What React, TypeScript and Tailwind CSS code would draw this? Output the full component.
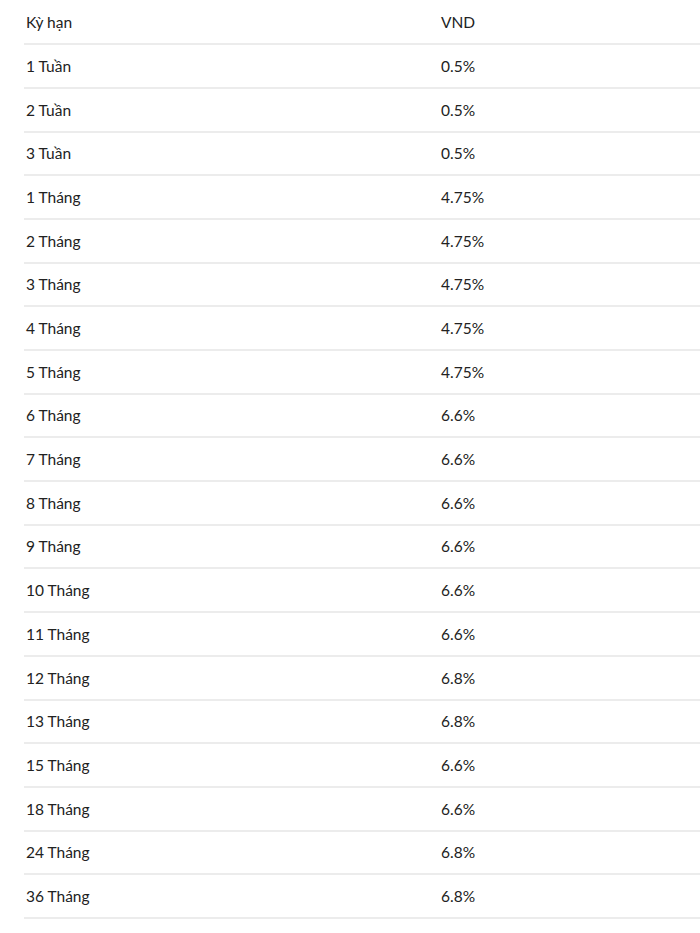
import React from "react";

const rows: [string, string][] = [
  ["1 Tuần", "0.5%"],
  ["2 Tuần", "0.5%"],
  ["3 Tuần", "0.5%"],
  ["1 Tháng", "4.75%"],
  ["2 Tháng", "4.75%"],
  ["3 Tháng", "4.75%"],
  ["4 Tháng", "4.75%"],
  ["5 Tháng", "4.75%"],
  ["6 Tháng", "6.6%"],
  ["7 Tháng", "6.6%"],
  ["8 Tháng", "6.6%"],
  ["9 Tháng", "6.6%"],
  ["10 Tháng", "6.6%"],
  ["11 Tháng", "6.6%"],
  ["12 Tháng", "6.8%"],
  ["13 Tháng", "6.8%"],
  ["15 Tháng", "6.6%"],
  ["18 Tháng", "6.6%"],
  ["24 Tháng", "6.8%"],
  ["36 Tháng", "6.8%"],
];

function Row({ a, b }: { a: string; b: string }) {
  return (
    <div className="grid grid-cols-[417px_1fr] h-[43.7px] border-b-2 border-[#ececec] items-center">
      <div className="pl-[2px] pt-[1px]">{a}</div>
      <div className="pt-[1px]">{b}</div>
    </div>
  );
}

export default function App() {
  return (
    <div
      className="w-[700px] h-[933px] bg-white overflow-hidden pl-[24px] pt-[1.5px] text-[15.5px] text-[#222222]"
      style={{ fontFamily: "Lato, 'Noto Sans', sans-serif" }}
    >
      <Row a="Kỳ hạn" b="VND" />
      {rows.map(([a, b]) => (
        <Row key={a} a={a} b={b} />
      ))}
    </div>
  );
}
